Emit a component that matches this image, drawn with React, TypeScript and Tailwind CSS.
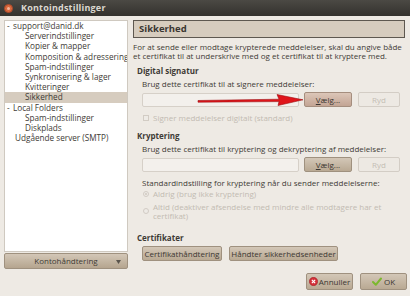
import React from "react";

const font = { fontFamily: '"Open Sans", "DejaVu Sans", sans-serif' };

function TreeItem({ label, indent, selected, dash }: { label: string; indent: number; selected?: boolean; dash?: boolean }) {
  return (
    <div className={`h-[10.2px] leading-[10.2px] flex items-center whitespace-nowrap ${selected ? "bg-[#d6ccbf]" : ""}`}>
      {dash ? (
        <>
          <span className="w-[8px] pl-[2px] text-[#4a4640]">-</span>
          <span>{label}</span>
        </>
      ) : (
        <span style={{ paddingLeft: indent }}>{label}</span>
      )}
    </div>
  );
}

function Btn({ children, className = "", disabled, hot }: { children: React.ReactNode; className?: string; disabled?: boolean; hot?: boolean }) {
  const base = disabled
    ? "bg-[#ede9e3] border-[#d3cdc5] text-[#c4bdb4]"
    : hot
    ? "bg-gradient-to-b from-[#dcc6b8] to-[#c3a594] border-[#a58e7e] text-[#3c3732]"
    : "bg-gradient-to-b from-[#d3c7b7] to-[#b9a993] border-[#9f917f] text-[#3c3732]";
  return (
    <div className={`h-[15px] rounded-[2px] border flex items-center justify-center whitespace-nowrap ${base} ${className}`}>
      {children}
    </div>
  );
}

export default function App() {
  return (
    <div
      className="w-[410px] h-[296px] bg-[#eeeae4] flex flex-col overflow-hidden text-[8px] text-[#3e3b36]"
      style={font}
    >
      {/* Title bar */}
      <div className="h-[16px] bg-gradient-to-b from-[#4b4944] to-[#34322e] flex items-center pl-[4px]">
        <div className="w-[9px] h-[9px] rounded-full bg-[#d8683c] border border-[#a9482a] flex items-center justify-center">
          <div className="w-[3px] h-[3px] rounded-full bg-[#f4b59a]" />
        </div>
        <span className="ml-[8px] text-[9px] font-bold text-[#dcd8d0] tracking-[0.2px]">Kontoindstillinger</span>
      </div>

      {/* Body */}
      <div className="flex px-[4px] pt-[4px]">
        {/* Left */}
        <div className="w-[124px] flex flex-col">
          <div className="h-[232px] bg-white border border-[#cfc9c0] text-[8.2px] overflow-hidden">
            <TreeItem label="support@danid.dk" indent={0} dash />
            <TreeItem label="Serverindstillinger" indent={20} />
            <TreeItem label="Kopier & mapper" indent={20} />
            <TreeItem label="Komposition & adressering" indent={20} />
            <TreeItem label="Spam-indstillinger" indent={20} />
            <TreeItem label="Synkronisering & lager" indent={20} />
            <TreeItem label="Kvitteringer" indent={20} />
            <TreeItem label="Sikkerhed" indent={20} selected />
            <TreeItem label="Local Folders" indent={0} dash />
            <TreeItem label="Spam-indstillinger" indent={20} />
            <TreeItem label="Diskplads" indent={20} />
            <TreeItem label="Udgående server (SMTP)" indent={10} />
          </div>
          <div className="mt-[1px] h-[16px] rounded-[2px] border border-[#9f917f] bg-gradient-to-b from-[#d3c7b7] to-[#b5a58f] flex items-center relative">
            <span className="flex-1 text-center">Kontohåndtering</span>
            <svg className="absolute right-[6px] top-[6px]" width="5" height="4" viewBox="0 0 5 4">
              <path d="M0 0 L5 0 L2.5 4 Z" fill="#5a544c" />
            </svg>
          </div>
        </div>

        {/* Right */}
        <div className="ml-[5px] flex-1 pr-[1px] flex flex-col">
          <div className="h-[18px] bg-[#d6ccbe] border border-[#5e5850] flex items-center pl-[5px]">
            <span className="text-[9.5px] font-bold text-[#3a3631]">Sikkerhed</span>
          </div>
          <div className="mt-[4px] whitespace-nowrap">
            <div className="h-[9px] leading-[9px]">For at sende eller modtage krypterede meddelelser, skal du angive både</div>
            <div className="h-[9px] leading-[9px]">et certifikat til at underskrive med og et certifikat til at kryptere med.</div>
          </div>

          <div className="mt-[6px] h-[10px] leading-[10px] pl-[4px] font-bold">Digital signatur</div>
          <div className="pl-[9px] flex flex-col">
            <div className="mt-[3px] h-[10px] leading-[10px]">Brug dette certifikat til at signere meddelelser:</div>
            <div className="mt-[3px] h-[15px] flex items-center relative">
              <div className="w-[157px] h-[14px] bg-[#f3f0ec] border border-[#d6d0c8] rounded-[2px]" />
              <Btn hot className="ml-[5px] w-[48px]"><span className="underline">V</span>ælg...</Btn>
              <Btn disabled className="ml-[6px] w-[42px]">Ryd</Btn>
              <svg className="absolute left-[55px] top-[1px]" width="108" height="14" viewBox="0 0 108 14">
                <path d="M1 7.5 L82 6.2 L80 1.5 L106 6.8 L81 12.5 L82 8.6 L1 9.2 Z" fill="#e0141a" stroke="#9c0d10" strokeWidth="0.6" strokeLinejoin="round" />
              </svg>
            </div>
            <div className="mt-[6px] h-[10px] flex items-center text-[#c2bbb2]">
              <div className="w-[6px] h-[6px] border border-[#d2ccc4] bg-[#eeebe6] mr-[4px] ml-[1px]" />
              Signer meddelelser digitalt (standard)
            </div>
          </div>

          <div className="mt-[8px] h-[10px] leading-[10px] pl-[4px] font-bold">Kryptering</div>
          <div className="pl-[9px] flex flex-col">
            <div className="mt-[3px] h-[10px] leading-[10px] whitespace-nowrap">Brug dette certifikat til kryptering og dekryptering af meddelelser:</div>
            <div className="mt-[3px] h-[15px] flex items-center">
              <div className="w-[157px] h-[14px] bg-[#f3f0ec] border border-[#d6d0c8] rounded-[2px]" />
              <Btn className="ml-[5px] w-[48px]"><span className="underline">V</span>ælg...</Btn>
              <Btn disabled className="ml-[6px] w-[42px]">Ryd</Btn>
            </div>
            <div className="mt-[6px] h-[10px] leading-[10px] whitespace-nowrap">Standardindstilling for kryptering når du sender meddelelserne:</div>
            <div className="mt-[1px] h-[10px] flex items-center text-[#c2bbb2] whitespace-nowrap">
              <div className="w-[6px] h-[6px] rounded-full border border-[#d2ccc4] bg-[#eeebe6] mr-[4px] ml-[1px] flex items-center justify-center">
                <div className="w-[2px] h-[2px] rounded-full bg-[#cfc8bf]" />
              </div>
              Aldrig (brug ikke kryptering)
            </div>
            <div className="mt-[3px] flex text-[#c2bbb2]">
              <div className="w-[6px] h-[6px] rounded-full border border-[#d2ccc4] bg-[#eeebe6] mr-[4px] ml-[1px] mt-[6px] shrink-0" />
              <div>
                <div className="h-[9px] leading-[9px] whitespace-nowrap">Altid (deaktiver afsendelse med mindre alle modtagere har et</div>
                <div className="h-[9px] leading-[9px]">certifikat)</div>
              </div>
            </div>
          </div>

          <div className="mt-[13px] h-[10px] leading-[10px] pl-[4px] font-bold">Certifikater</div>
          <div className="pl-[9px] mt-[3px] flex">
            <Btn className="w-[80px]">Certifikathåndtering</Btn>
            <Btn className="ml-[7px] w-[109px]">Håndter sikkerhedsenheder</Btn>
          </div>
        </div>
      </div>

      {/* Bottom buttons */}
      <div className="mt-[4px] flex justify-end pr-[3px]">
        <Btn className="w-[47px] h-[17px]">
          <svg width="9" height="9" viewBox="0 0 10 10" className="mr-[1px]">
            <circle cx="5" cy="5" r="4.6" fill="#d4313a" stroke="#9b1b22" strokeWidth="0.6" />
            <path d="M3.2 3.2 L6.8 6.8 M6.8 3.2 L3.2 6.8" stroke="#fff" strokeWidth="1.3" />
          </svg>
          <span>Annuller</span>
        </Btn>
        <Btn className="ml-[7px] w-[47px] h-[17px]">
          <svg width="10" height="9" viewBox="0 0 10 9" className="mr-[2px]">
            <path d="M1 5 L3.8 7.8 L9 1.5" stroke="#7cb82f" strokeWidth="2" fill="none" strokeLinecap="round" strokeLinejoin="round" />
          </svg>
          <span>OK</span>
        </Btn>
      </div>
    </div>
  );
}
